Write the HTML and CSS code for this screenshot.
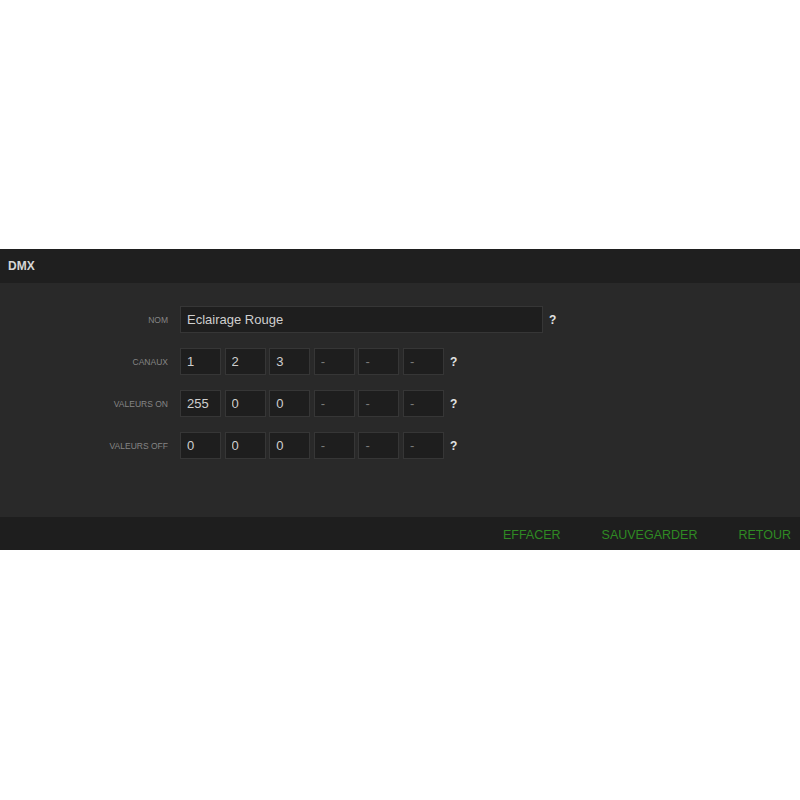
FILE: index.html
```html
<!DOCTYPE html>
<html>
<head>
<meta charset="utf-8">
<link rel="stylesheet" href="styles.css">
</head>
<body>
<div class="page">
  <div class="panel">
    <div class="panel-header">DMX</div>
    <div class="panel-body">
      <div class="row">
        <label class="label">NOM</label>
        <div class="fields">
          <input class="field wide" type="text" value="Eclairage Rouge">
          <span class="help">?</span>
        </div>
      </div>
      <div class="row">
        <label class="label">CANAUX</label>
        <div class="fields">
          <div class="group">
            <input class="field small" type="text" value="1">
            <input class="field small" type="text" value="2">
            <input class="field small" type="text" value="3">
            <input class="field small" type="text" placeholder="-">
            <input class="field small" type="text" placeholder="-">
            <input class="field small" type="text" placeholder="-">
          </div>
          <span class="help">?</span>
        </div>
      </div>
      <div class="row">
        <label class="label">VALEURS ON</label>
        <div class="fields">
          <div class="group">
            <input class="field small" type="text" value="255">
            <input class="field small" type="text" value="0">
            <input class="field small" type="text" value="0">
            <input class="field small" type="text" placeholder="-">
            <input class="field small" type="text" placeholder="-">
            <input class="field small" type="text" placeholder="-">
          </div>
          <span class="help">?</span>
        </div>
      </div>
      <div class="row">
        <label class="label">VALEURS OFF</label>
        <div class="fields">
          <div class="group">
            <input class="field small" type="text" value="0">
            <input class="field small" type="text" value="0">
            <input class="field small" type="text" value="0">
            <input class="field small" type="text" placeholder="-">
            <input class="field small" type="text" placeholder="-">
            <input class="field small" type="text" placeholder="-">
          </div>
          <span class="help">?</span>
        </div>
      </div>
    </div>
    <div class="panel-footer">
      <a class="action">EFFACER</a>
      <a class="action">SAUVEGARDER</a>
      <a class="action">RETOUR</a>
    </div>
  </div>
</div>
</body>
</html>
```
FILE: styles.css
```css
html, body {
  margin: 0;
  padding: 0;
  background: #ffffff;
  font-family: "Liberation Sans", Arial, sans-serif;
}

.page {
  min-height: 800px;
  display: flex;
  flex-direction: column;
  justify-content: flex-start;
  padding-top: 249px;
  box-sizing: border-box;
}

.panel {
  width: 100%;
  background: #292929;
}

.panel-header {
  height: 34px;
  line-height: 35px;
  padding-left: 8px;
  background: #1f1f1f;
  color: #d6d6d6;
  font-size: 12px;
  font-weight: bold;
}

.panel-body {
  height: 234px;
  box-sizing: border-box;
  padding-top: 23px;
  display: flex;
  flex-direction: column;
  gap: 15px;
}

.row {
  display: flex;
  align-items: center;
  gap: 12px;
  height: 27px;
}

.label {
  width: 168px;
  text-align: right;
  font-size: 8.5px;
  color: #858585;
  flex-shrink: 0;
}

.fields {
  display: flex;
  align-items: center;
  gap: 6px;
}

.group {
  display: flex;
  gap: 3.6px;
}

.field {
  box-sizing: border-box;
  height: 27px;
  margin: 0;
  padding: 0 0 0 6px;
  background: #1e1e1e;
  border: 1px solid #363636;
  color: #cfcfcf;
  font-family: "Liberation Sans", Arial, sans-serif;
  font-size: 13px;
  outline: none;
}

.field::placeholder {
  color: #7a7a7a;
}

.wide {
  width: 363px;
}

.small {
  width: 41px;
}

.help {
  color: #e2e2e2;
  font-size: 12px;
  font-weight: bold;
}

.panel-footer {
  height: 33px;
  box-sizing: border-box;
  padding-top: 3px;
  background: #1e1e1e;
  display: flex;
  justify-content: flex-end;
  align-items: center;
  gap: 41px;
  padding-right: 9px;
}

.action {
  color: #2f8a23;
  font-size: 12.5px;
  cursor: pointer;
}
```
